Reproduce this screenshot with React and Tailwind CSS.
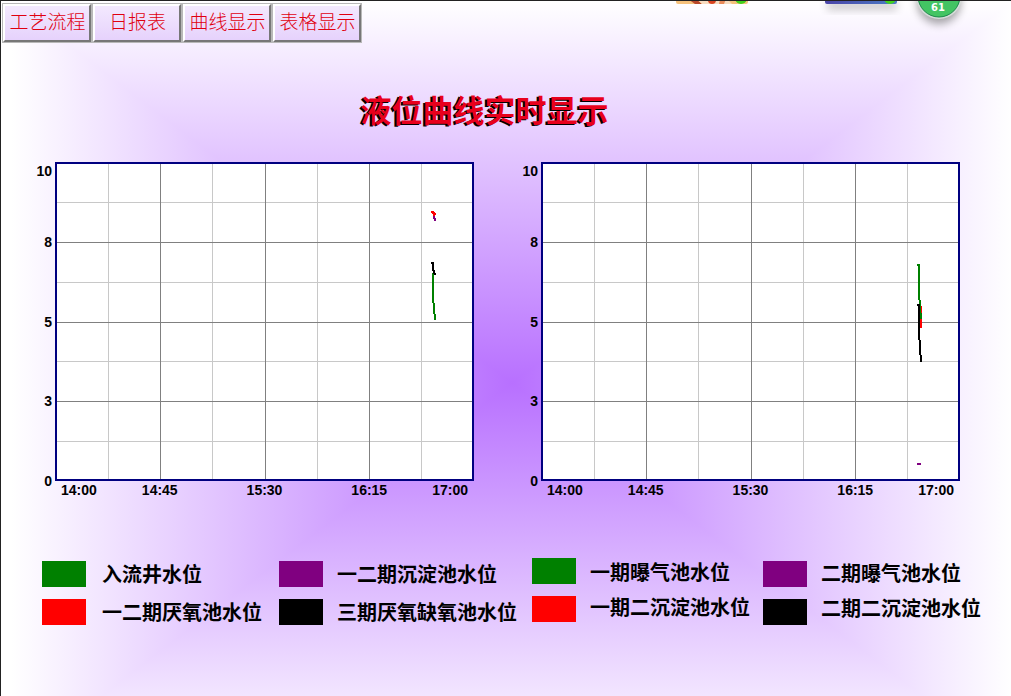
import React from "react";

const menus = ["工艺流程", "日报表", "曲线显示", "表格显示"];

const yLabels = ["8", "5", "3"];
const xLabels = ["14:45", "15:30", "16:15"];

const minorX = [53, 157, 262, 366];
const majorX = [105, 210, 314];
const minorY = [40, 120, 199, 279];
const majorY = [80, 160, 239];

const leftSeries = [
  { color: "#800080", points: "378,50 379,54 380,59" },
  { color: "#ff0000", points: "376,50 378,50 379,54 379,51 381,52" },
  { color: "#008000", points: "378,111 378,135 380,158" },
  { color: "#000000", points: "376,101 378,101 378,107 380,113" },
];

const rightSeries = [
  { color: "#ff0000", points: "380,144 380,156 380,166" },
  { color: "#008000", points: "376,103 378,103 378,132 380,157" },
  { color: "#000000", points: "376,143 378,143 378,170 380,200" },
  { color: "#800080", points: "376,302 380,302" },
];

const legends = [
  {
    className: "gap-4",
    labelClass: "gap-3 pt-px",
    items: [
      { color: "bg-[#008000]", label: "入流井水位" },
      { color: "bg-[#ff0000]", label: "一二期厌氧池水位" },
    ],
  },
  {
    className: "gap-[14px]",
    labelClass: "gap-3 pt-px",
    items: [
      { color: "bg-[#800080]", label: "一二期沉淀池水位" },
      { color: "bg-black", label: "三期厌氧缺氧池水位" },
    ],
  },
  {
    className: "gap-[14px] -mt-[3px]",
    labelClass: "gap-[9px] pt-[2px]",
    items: [
      { color: "bg-[#008000]", label: "一期曝气池水位" },
      { color: "bg-[#ff0000]", label: "一期二沉淀池水位" },
    ],
  },
  {
    className: "gap-[14px]",
    labelClass: "gap-[9px]",
    items: [
      { color: "bg-[#800080]", label: "二期曝气池水位" },
      { color: "bg-black", label: "二期二沉淀池水位" },
    ],
  },
];

const Chart = ({ name, series }) => {
  return (
    <div className="grid grid-cols-[27px_1fr] font-['Liberation_Sans',sans-serif] text-sm leading-4 font-bold text-black">
      {/* Y axis */}
      <div className="grid grid-rows-8 pr-[3px] text-right">
        <span className="pt-px">10</span>
        {yLabels.map((label) => (
          <span key={label} className="row-span-2 self-center">
            {label}
          </span>
        ))}
        <span className="-mb-2 self-end">0</span>
      </div>

      <svg
        role="img"
        aria-label={name}
        viewBox="0 0 419 319"
        preserveAspectRatio="none"
        className="block h-[319px] w-full bg-white"
        shapeRendering="crispEdges"
      >
        {minorX.map((x) => (
          <rect key={x} x={x} y="0" width="1" height="319" fill="#c8c8c8" />
        ))}
        {minorY.map((y) => (
          <rect key={y} x="0" y={y} width="419" height="1" fill="#c8c8c8" />
        ))}
        {majorX.map((x) => (
          <rect key={x} x={x} y="0" width="1" height="319" fill="#808080" />
        ))}
        {majorY.map((y) => (
          <rect key={y} x="0" y={y} width="419" height="1" fill="#808080" />
        ))}
        {series.map((s) => (
          <polyline
            key={s.color}
            points={s.points}
            fill="none"
            stroke={s.color}
            strokeWidth="2"
          />
        ))}
        <rect
          x="1"
          y="1"
          width="417"
          height="317"
          fill="none"
          stroke="#000080"
          strokeWidth="2"
        />
      </svg>

      {/* X axis */}
      <div className="col-start-2 grid grid-cols-8 pt-px text-center">
        <span className="pl-[6px] text-left">14:00</span>
        {xLabels.map((label) => (
          <span key={label} className="col-span-2">
            {label}
          </span>
        ))}
        <span className="pr-[6px] text-right">17:00</span>
      </div>
    </div>
  );
};

const DesktopIcons = () => {
  return (
    <svg
      aria-hidden="true"
      width="300"
      height="36"
      viewBox="0 1 300 36"
      className="absolute top-0 right-[41px] -mt-px"
    >
      <defs>
        <linearGradient id="blueTile" x1="0" x2="1">
          <stop offset="0" stopColor="#4a45a8" />
          <stop offset="1" stopColor="#4a7cc4" />
        </linearGradient>
        <filter id="soft" x="-50%" y="-50%" width="200%" height="200%">
          <feGaussianBlur stdDeviation="4" />
        </filter>
      </defs>
      <rect x="6" y="-4" width="72" height="9" rx="2" fill="#f6c27c" />
      <path d="M18 0h8l6 5h-7z" fill="#b8482a" />
      <path d="M27 0h30l5 5H32z" fill="#f7dcc0" />
      <circle cx="42" cy="1" r="4" fill="#d8421f" />
      <path d="M50 0h6l-2 5h-5z" fill="#e88a5a" />
      <circle cx="71" cy="-1" r="6" fill="#3fd21c" />

      <rect x="157" y="2" width="70" height="9" fill="#000" opacity="0.2" filter="url(#soft)" />
      <rect x="155" y="-4" width="72" height="9" rx="2" fill="url(#blueTile)" />
      <circle cx="220" cy="-1" r="6" fill="#3fd21c" />

      <circle cx="269" cy="3" r="22" fill="#000" opacity="0.35" filter="url(#soft)" />
      <circle cx="269" cy="-3" r="23" fill="#d5dcd8" />
      <circle cx="269" cy="-3" r="21" fill="#43c463" stroke="#1d8a4c" strokeWidth="1" />
      <text
        x="268"
        y="12"
        textAnchor="middle"
        fill="#fff"
        className="font-['DejaVu_Sans',sans-serif] text-[10px] font-bold"
      >
        61
      </text>
    </svg>
  );
};

const App = () => {
  return (
    <div className="relative min-h-screen overflow-hidden border-t border-l border-[#222] bg-[linear-gradient(to_right,#ffffff_10px,#b870ff_511px,#ffffff_1012px),linear-gradient(to_bottom,#ffffff_0px,#b870ff_382px,#ffffff_764px)] bg-blend-lighten font-['Liberation_Serif','Noto_Sans_CJK_SC',serif]">
      <nav className="flex pt-[2px] pl-px">
        {menus.map((menu) => (
          <button
            key={menu}
            type="button"
            className="h-10 w-[90px] border border-[#b8b8b8] text-[19px] font-light whitespace-nowrap text-[#e00010]"
          >
            <span className="flex h-full items-center justify-center border-2 border-t-white border-r-[#777] border-b-[#777] border-l-white bg-linear-to-b from-[#f3e9fe] to-[#e6d2fc] pt-px pl-px">
              {menu}
            </span>
          </button>
        ))}
      </nav>
      <DesktopIcons />

      <h1 className="mt-[49px] pr-[43px] text-center text-[31px] leading-10 font-bold text-[#e8001c] [text-shadow:-2px_1px_0_#000]">
        液位曲线实时显示
      </h1>

      <main className="mt-[30px] grid grid-cols-2 gap-10 pr-[51px] pl-[27px]">
        <Chart name="一二期液位曲线" series={leftSeries} />
        <Chart name="曝气池液位曲线" series={rightSeries} />
      </main>

      {/* Legend */}
      <div className="mt-[63px] grid grid-cols-[237fr_253fr_231fr_248fr] pl-[41px] text-xl leading-[26px] font-bold text-black">
        {legends.map((group, index) => (
          <div key={index} className={`flex ${group.className}`}>
            <div className="flex flex-col gap-3">
              {group.items.map((item) => (
                <span
                  key={item.label}
                  className={`block h-[26px] w-11 ${item.color}`}
                />
              ))}
            </div>
            <div className={`flex flex-col whitespace-nowrap ${group.labelClass}`}>
              {group.items.map((item) => (
                <span key={item.label}>{item.label}</span>
              ))}
            </div>
          </div>
        ))}
      </div>
    </div>
  );
};

export default App;
